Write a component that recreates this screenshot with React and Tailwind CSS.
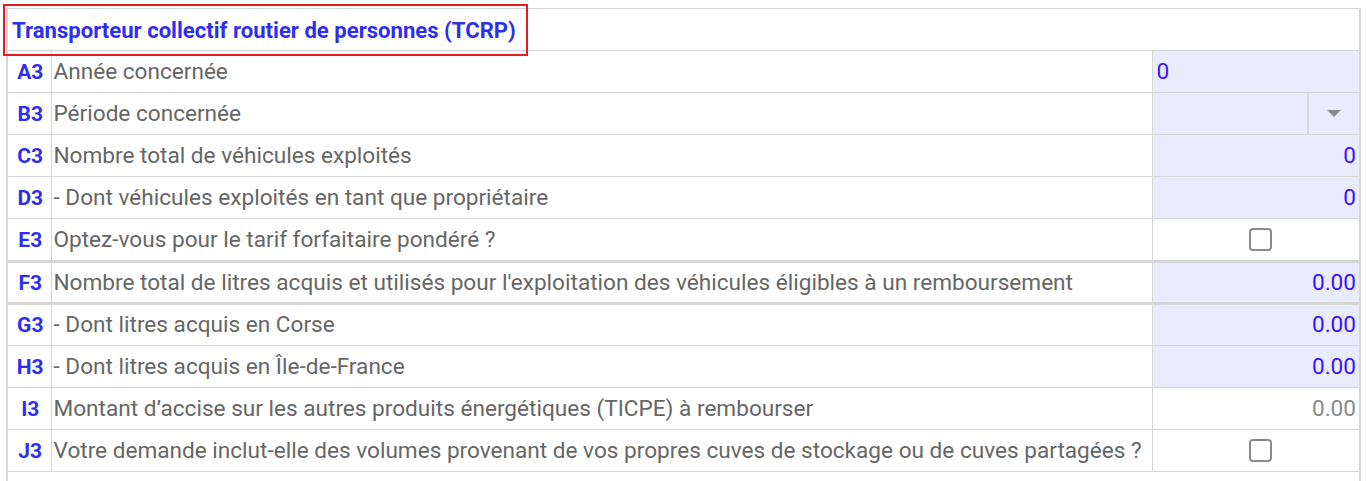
import React from "react";

const rows = [
  { code: "A3", label: "Année concernée", kind: "input", value: "0", align: "left" },
  { code: "B3", label: "Période concernée", kind: "select" },
  { code: "C3", label: "Nombre total de véhicules exploités", kind: "input", value: "0" },
  { code: "D3", label: "- Dont véhicules exploités en tant que propriétaire", kind: "input", value: "0" },
  { code: "E3", label: "Optez-vous pour le tarif forfaitaire pondéré ?", kind: "check" },
  {
    code: "F3",
    label: "Nombre total de litres acquis et utilisés pour l'exploitation des véhicules éligibles à un remboursement",
    kind: "input",
    value: "0.00",
    thick: true,
  },
  { code: "G3", label: "- Dont litres acquis en Corse", kind: "input", value: "0.00" },
  { code: "H3", label: "- Dont litres acquis en Île-de-France", kind: "input", value: "0.00" },
  { code: "I3", label: "Montant d’accise sur les autres produits énergétiques (TICPE) à rembourser", kind: "readonly", value: "0.00" },
  {
    code: "J3",
    label: "Votre demande inclut-elle des volumes provenant de vos propres cuves de stockage ou de cuves partagées ?",
    kind: "check",
  },
];

const Checkbox = () => (
  <div className="w-[23px] h-[23px] rounded-[4px] border-2 border-[#8a8a8a] bg-white ml-[9px]" />
);

const ValueCell = ({ row }) => {
  if (row.kind === "select") {
    return (
      <td className="p-0 bg-[#e8ecfd] border border-[#d6d6d6]">
        <div className="flex h-[41px]">
          <div className="flex-1" />
          <div className="w-[52px] border-l-2 border-[#d6d6d6] flex items-center justify-center">
            <div className="w-0 h-0 border-l-[7px] border-r-[7px] border-t-[7px] border-l-transparent border-r-transparent border-t-[#8a8a8a]" />
          </div>
        </div>
      </td>
    );
  }
  if (row.kind === "check") {
    return (
      <td className="p-0 bg-white border border-[#d6d6d6]">
        <div className="flex items-center justify-center h-[41px]">
          <Checkbox />
        </div>
      </td>
    );
  }
  if (row.kind === "readonly") {
    return (
      <td className="px-[3px] bg-white border border-[#d6d6d6] text-right text-[#8a8a8a]">
        {row.value}
      </td>
    );
  }
  return (
    <td
      className={`px-[3px] bg-[#e8ecfd] border border-[#d6d6d6] text-[#3d14ff] ${
        row.align === "left" ? "text-left" : "text-right"
      }`}
    >
      {row.value}
    </td>
  );
};

export default function App() {
  return (
    <div className="bg-white h-[481px] pt-[8px] pl-[6px] font-['Roboto','Liberation_Sans',sans-serif] relative overflow-hidden">
      <div className="absolute left-[3px] top-[4px] w-[525px] h-[52px] border-2 border-[#e31b23] pointer-events-none z-10" />
      <table className="w-[1355px] border-collapse table-fixed text-[22.6px] leading-[26px] border-l-2 border-r-2 border-[#d6d6d6]">
        <colgroup>
          <col className="w-[44px]" />
          <col />
          <col className="w-[207px]" />
        </colgroup>
        <tbody>
          <tr className="h-[42px]">
            <td colSpan={3} className="border border-[#d6d6d6] px-[4px] text-[22.1px] font-bold text-[#2e2ef0]">
              Transporteur collectif routier de personnes (TCRP)
            </td>
          </tr>
          {rows.map((row) => (
            <tr
              key={row.code}
              className={`h-[42px] ${row.thick ? "border-y-[3px] border-[#d6d6d6]" : ""}`}
            >
              <td className="border border-[#d6d6d6] text-center font-bold text-[#2e2ef0] text-[21px] pl-[2px]">
                {row.code}
              </td>
              <td className="border border-[#d6d6d6] px-[2px] text-[#666666] whitespace-nowrap overflow-hidden">
                {row.label}
              </td>
              <ValueCell row={row} />
            </tr>
          ))}
          <tr className="h-[42px]">
            <td colSpan={3} className="border-t border-[#d6d6d6]" />
          </tr>
        </tbody>
      </table>
    </div>
  );
}
